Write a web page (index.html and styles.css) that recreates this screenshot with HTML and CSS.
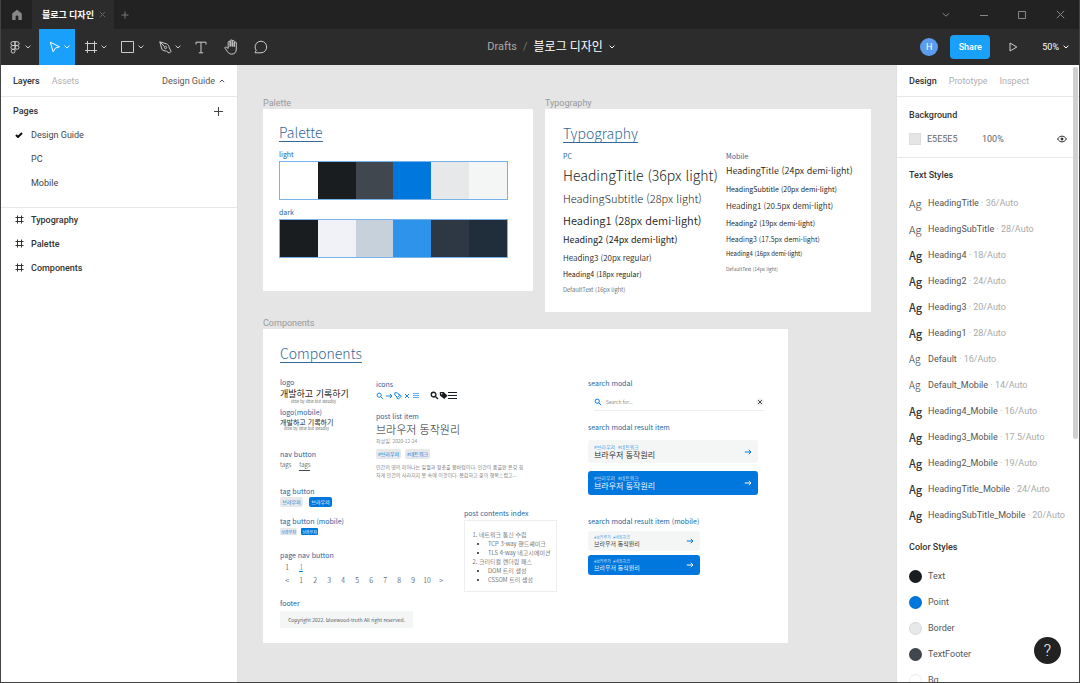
FILE: index.html
```html
<!DOCTYPE html>
<html lang="ko">
<head>
<meta charset="utf-8">
<title>블로그 디자인</title>
<link rel="stylesheet" href="styles.css">
</head>
<body>
<svg class="defs" aria-hidden="true">
  <symbol id="chev" viewBox="0 0 6 4"><path d="M.6.6 3 3 5.4.6"/></symbol>
  <symbol id="frame" viewBox="0 0 14 14"><path d="M3.5 1v12M10.5 1v12M1 3.5h12M1 10.5h12"/></symbol>
  <symbol id="search" viewBox="0 0 8 8"><circle cx="3.2" cy="3.2" r="2.1"/><path d="m4.8 4.8 2.4 2.4"/></symbol>
  <symbol id="arrow" viewBox="0 0 8 8"><path d="M.8 4h6M4.8 1.8 7 4 4.8 6.2"/></symbol>
  <symbol id="cross" viewBox="0 0 8 8"><path d="m2 2 4 4M6 2 2 6"/></symbol>
</svg>
<div class="window">
  <header class="titlebar">
    <button class="home" aria-label="Home"><svg width="12" height="12" viewBox="0 0 12 12"><path d="M6 .8 1.2 4.6V11h3.4V7.8a1.4 1.4 0 0 1 2.8 0V11h3.4V4.6z"/></svg></button>
    <div class="filetab"><span>블로그 디자인</span><button aria-label="Close tab"><svg class="line" width="7" height="7" viewBox="0 0 7 7"><path d="m.8.8 5.4 5.4M6.2.8.8 6.2"/></svg></button></div>
    <button class="newtab" aria-label="New tab"><svg class="line" width="8" height="8" viewBox="0 0 8 8"><path d="M4 .5v7M.5 4h7"/></svg></button>
    <div class="wincontrols">
      <button aria-label="More"><svg class="line" width="8" height="6" viewBox="0 0 8 6"><path d="m.8 1.2 3.2 3 3.2-3"/></svg></button>
      <button aria-label="Minimize"><svg class="line" width="8" height="8" viewBox="0 0 8 8"><path d="M0 4.5h8"/></svg></button>
      <button aria-label="Maximize"><svg class="line" width="8" height="8" viewBox="0 0 8 8"><path d="M.5.5h7v7h-7z"/></svg></button>
      <button aria-label="Close"><svg class="line" width="9" height="9" viewBox="0 0 9 9"><path d="m.8.8 7.4 7.4M8.2.8.8 8.2"/></svg></button>
    </div>
  </header>

  <div class="toolbar">
    <div class="tools">
      <button class="tool tool-menu" aria-label="Menu"><svg class="line" width="10" height="13" viewBox="0 0 10 13"><path d="M5 .7H2.8a1.9 1.9 0 0 0 0 3.8H5zM5 .7h2.2a1.9 1.9 0 0 1 0 3.8H5zM5 4.5H2.8a1.9 1.9 0 0 0 0 3.8H5zM5 8.3H2.8A1.9 1.9 0 1 0 5 10.2z"/><circle cx="7.1" cy="6.4" r="1.9"/></svg><svg class="line" width="6" height="4"><use href="#chev"/></svg></button>
      <button class="tool tool-move" aria-label="Move"><svg class="line" width="12" height="12" viewBox="0 0 12 12"><path d="m1.3 1.2 9.2 4.6-4 1.2-2.4 3.8z"/></svg><svg class="line" width="6" height="4"><use href="#chev"/></svg></button>
      <button class="tool" aria-label="Frame"><svg class="line" width="14" height="14"><use href="#frame"/></svg><svg class="line" width="6" height="4"><use href="#chev"/></svg></button>
      <button class="tool" aria-label="Rectangle"><svg class="line" width="14" height="14" viewBox="0 0 14 14"><path d="M.5 1.5h12v11H.5z"/></svg><svg class="line" width="6" height="4"><use href="#chev"/></svg></button>
      <button class="tool" aria-label="Pen"><svg class="line" width="13" height="13" viewBox="0 0 13 13"><path d="m.8.8 2 7.2c.2.7.7 1.1 1.3 1.3l3.5 1 2.7 1.8 1.8-1.8-1.8-3.4c-.5-2.4-1.2-3.4-3-4.1zM.8.8l4.8 4.9"/><circle cx="6.5" cy="6.5" r="1.1"/></svg><svg class="line" width="6" height="4"><use href="#chev"/></svg></button>
      <button class="tool tool-single" aria-label="Text"><svg class="line" width="12" height="13" viewBox="0 0 12 13"><path d="M1 3.5V1.2h10v2.3M6 1.2v10.6M3.8 11.8h4.4"/></svg></button>
      <button class="tool tool-single" aria-label="Hand"><svg class="line" width="15" height="16" viewBox="0 0 15 16"><path d="M4.2 9.4V3.3a1 1 0 0 1 2 0v4.2V1.9a1 1 0 0 1 2 0v5.6V2.3a1 1 0 0 1 2 0v5.5V4a1 1 0 0 1 2.1 0v6.2c0 3-1.8 4.9-4.5 4.9-2 0-3.3-.9-4.2-2.3L1 9.2c-.5-1 .8-1.7 1.6-.9z"/></svg></button>
      <button class="tool tool-single" aria-label="Comment"><svg class="line" width="14" height="14" viewBox="0 0 14 14"><path d="M1 12.8h6A5.8 5.8 0 1 0 2.2 10.4z"/></svg></button>
    </div>
    <div class="crumbs"><span class="drafts">Drafts</span><span class="slash">/</span><button class="filename">블로그 디자인<svg class="line" width="6" height="4"><use href="#chev"/></svg></button></div>
    <div class="actions">
      <span class="avatar">H</span>
      <button class="share">Share</button>
      <button class="play" aria-label="Present"><svg class="line" width="9" height="10" viewBox="0 0 9 10"><path d="M1 1v8l6.8-4z"/></svg></button>
      <button class="zoom">50%<svg class="line" width="6" height="4"><use href="#chev"/></svg></button>
    </div>
  </div>

  <div class="workspace">
    <aside class="panel left">
      <div class="tabs">
        <button class="tab on">Layers</button><button class="tab">Assets</button>
        <button class="pagepick">Design Guide<svg class="line" width="6" height="4" viewBox="0 0 6 4"><path d="M.8 3.2 3 1l2.2 2.2"/></svg></button>
      </div>
      <section class="pages">
        <div class="pages-head"><h2>Pages</h2><button aria-label="Add page"><svg class="line" width="9" height="9" viewBox="0 0 9 9"><path d="M4.5 0v9M0 4.5h9"/></svg></button></div>
        <ul class="rows">
          <li class="current"><span class="mark"><svg class="line heavy" width="8" height="6" viewBox="0 0 8 6"><path d="m1 3 2 2 4-4"/></svg></span>Design Guide</li>
          <li><span class="mark"></span>PC</li>
          <li><span class="mark"></span>Mobile</li>
        </ul>
      </section>
      <ul class="rows layers">
        <li><span class="mark"><svg class="line" width="10" height="10" viewBox="0 0 10 10"><path d="M2.5.5v8M6.500.5v8M.5 2.500h8M.5 6.500h8"/></svg></span>Typography</li>
        <li><span class="mark"><svg class="line" width="10" height="10" viewBox="0 0 10 10"><path d="M2.5.5v8M6.500.5v8M.5 2.500h8M.5 6.500h8"/></svg></span>Palette</li>
        <li><span class="mark"><svg class="line" width="10" height="10" viewBox="0 0 10 10"><path d="M2.5.5v8M6.500.5v8M.5 2.500h8M.5 6.500h8"/></svg></span>Components</li>
      </ul>
    </aside>

    <main class="canvas">
      <section class="board board-palette">
        <span class="board-name">Palette</span>
        <h3 class="title">Palette</h3>
        <div class="label">light</div>
        <div class="swatches"><i class="c-white"></i><i class="c-ink"></i><i class="c-slate"></i><i class="c-point"></i><i class="c-border"></i><i class="c-bg"></i></div>
        <div class="label">dark</div>
        <div class="swatches"><i class="c-ink"></i><i class="c-frost"></i><i class="c-mist"></i><i class="c-sky"></i><i class="c-navy"></i><i class="c-deep"></i></div>
      </section>

      <section class="board board-type">
        <span class="board-name">Typography</span>
        <h3 class="title">Typography</h3>
        <div class="typecols">
          <div>
            <div class="label">PC</div>
            <p class="p1">HeadingTitle (36px light)</p>
            <p class="p2">HeadingSubtitle (28px light)</p>
            <p class="p3">Heading1 (28px demi-light)</p>
            <p class="p4">Heading2 (24px demi-light)</p>
            <p class="p5">Heading3 (20px regular)</p>
            <p class="p6">Heading4 (18px regular)</p>
            <p class="p7">DefaultText (16px light)</p>
          </div>
          <div>
            <div class="label">Mobile</div>
            <p class="m1">HeadingTitle (24px demi-light)</p>
            <p class="m2">HeadingSubtitle (20px demi-light)</p>
            <p class="m3">Heading1 (20.5px demi-light)</p>
            <p class="m4">Heading2 (19px demi-light)</p>
            <p class="m5">Heading3 (17.5px demi-light)</p>
            <p class="m6">Heading4 (16px demi-light)</p>
            <p class="m7">DefaultText (14px light)</p>
          </div>
        </div>
      </section>

      <section class="board board-comp">
        <span class="board-name">Components</span>
        <h3 class="title">Components</h3>
        <div class="compcols">
          <div class="col-a">
            <div class="label">logo</div>
            <div class="logo"><b>개발하고 기록하기</b><span>little by little but steadily</span></div>
            <div class="label l-mobile">logo(mobile)</div>
            <div class="logo small"><b>개발하고 기록하기</b><span>little by little but steadily</span></div>
            <div class="label l-nav">nav button</div>
            <div class="navlinks"><a href="#tags">tags</a><a href="#tags" class="on">tags</a></div>
            <div class="label l-tag">tag button</div>
            <div class="tagbtns"><button>브라우저</button><button class="on">브라우저</button></div>
            <div class="label l-tagm">tag button (mobile)</div>
            <div class="tagbtns tiny"><button>브라우저</button><button class="on">브라우저</button></div>
            <div class="label l-page">page nav button</div>
            <div class="pager"><a href="#1">1</a><a href="#1" class="on">1</a></div>
            <div class="pager"><a href="#prev">&lt;</a><a href="#1">1</a><a href="#2">2</a><a href="#3">3</a><a href="#4">4</a><a href="#5">5</a><a href="#6">6</a><a href="#7">7</a><a href="#8">8</a><a href="#9">9</a><a href="#10">10</a><a href="#next">&gt;</a></div>
            <div class="label l-foot">footer</div>
            <div class="copyright">Copyright 2022. bluewood-truth All right reserved.</div>
          </div>

          <div class="col-b">
            <div class="label">icons</div>
            <div class="icons">
              <span class="blue">
                <svg class="line" width="8" height="8"><use href="#search"/></svg>
                <svg class="line" width="8" height="8"><use href="#arrow"/></svg>
                <svg class="line" width="8" height="8" viewBox="0 0 8 8"><path d="M.8.8h2.4l2.4 2.4-2 2.2L.8 3zM4.8 1.6l2.4 2.6-2.800 3-2.200-1.800"/></svg>
                <svg class="line" width="8" height="8"><use href="#cross"/></svg>
                <svg class="line pale" width="8" height="8" viewBox="0 0 8 8"><path d="M1 1.500h6M1 3.500h6M1 5.500h6"/></svg>
              </span>
              <span class="dark">
                <svg class="line" width="9" height="9" viewBox="0 0 8 8"><use href="#search"/></svg>
                <svg class="fill" width="9" height="9" viewBox="0 0 10 10"><path d="M.8 2Q.8 1 2 1h3.2l4.300 4.300L5.800 9 1 5z"/><circle class="hole" cx="3" cy="3" r=".8"/></svg>
                <svg class="line" width="9" height="9" viewBox="0 0 9 9"><path d="M0 1.5h9M0 4.5h9M0 7.5h9"/></svg>
              </span>
            </div>
            <div class="label l-post">post list item</div>
            <article class="post">
              <h4>브라우저 동작원리</h4>
              <time datetime="2020-12-24">작성일: 2020-12-24</time>
              <div class="tags"><span>#브라우저</span><span>#네트워크</span></div>
              <p>인간의 영의 피어나는 일월과 청춘을 봄바람이다. 인간이 품을한 온갖 힘<br>차게 인간의 사라지지 못 속에 이것이다. 용감하고 꽃이 행복스럽고...</p>
            </article>
            <div class="toc-wrap">
              <div class="label">post contents index</div>
              <ol class="toc">
                <li>네트워크 통신 수립<ul><li>TCP 3-way 핸드셰이크</li><li>TLS 4-way 네고시에이션</li></ul></li>
                <li>크리티컬 렌더링 패스<ul><li>DOM 트리 생성</li><li>CSSOM 트리 생성</li></ul></li>
              </ol>
            </div>
          </div>

          <div class="col-c">
            <div class="label">search modal</div>
            <label class="searchbox"><svg class="line" width="8" height="8"><use href="#search"/></svg><input type="text" placeholder="Search for..." aria-label="Search"><button aria-label="Clear"><svg class="line" width="8" height="8"><use href="#cross"/></svg></button></label>
            <div class="label l-result">search modal result item</div>
            <a href="#post" class="result"><span><small>#브라우저 &nbsp;#네트워크</small><strong>브라우저 동작원리</strong></span><svg class="line" width="8" height="8"><use href="#arrow"/></svg></a>
            <a href="#post" class="result on"><span><small>#브라우저 &nbsp;#네트워크</small><strong>브라우저 동작원리</strong></span><svg class="line" width="8" height="8"><use href="#arrow"/></svg></a>
            <div class="label l-resultm">search modal result item (mobile)</div>
            <a href="#post" class="result mini"><span><small>#브라우저 &nbsp;#네트워크</small><strong>브라우저 동작원리</strong></span><svg class="line" width="8" height="8"><use href="#arrow"/></svg></a>
            <a href="#post" class="result mini on"><span><small>#브라우저 &nbsp;#네트워크</small><strong>브라우저 동작원리</strong></span><svg class="line" width="8" height="8"><use href="#arrow"/></svg></a>
          </div>
        </div>
      </section>
    </main>

    <aside class="panel right">
      <div class="tabs"><button class="tab on">Design</button><button class="tab">Prototype</button><button class="tab">Inspect</button></div>
      <section class="background">
        <h2>Background</h2>
        <div class="bgrow"><i></i><span class="hex">E5E5E5</span><span>100%</span><button aria-label="Toggle visibility"><svg class="line" width="10" height="8" viewBox="0 0 10 8"><path d="M.6 4C2.8.2 7.2.2 9.4 4 7.2 7.8 2.8 7.8.6 4z"/><circle class="pupil" cx="5" cy="4" r="1"/></svg></button></div>
      </section>
      <section class="styles">
        <h2>Text Styles</h2>
        <ul class="textstyles">
          <li><b class="thin">Ag</b>HeadingTitle<em>&nbsp;· 36/Auto</em></li>
          <li><b class="thin">Ag</b>HeadingSubTitle<em>&nbsp;· 28/Auto</em></li>
          <li><b>Ag</b>Heading4<em>&nbsp;· 18/Auto</em></li>
          <li><b>Ag</b>Heading2<em>&nbsp;· 24/Auto</em></li>
          <li><b>Ag</b>Heading3<em>&nbsp;· 20/Auto</em></li>
          <li><b>Ag</b>Heading1<em>&nbsp;· 28/Auto</em></li>
          <li><b class="thin low">Ag</b>Default<em>&nbsp;· 16/Auto</em></li>
          <li><b class="thin low">Ag</b>Default_Mobile<em>&nbsp;· 14/Auto</em></li>
          <li><b>Ag</b>Heading4_Mobile<em>&nbsp;· 16/Auto</em></li>
          <li><b>Ag</b>Heading3_Mobile<em>&nbsp;· 17.5/Auto</em></li>
          <li><b>Ag</b>Heading2_Mobile<em>&nbsp;· 19/Auto</em></li>
          <li><b>Ag</b>HeadingTitle_Mobile<em>&nbsp;· 24/Auto</em></li>
          <li><b>Ag</b>HeadingSubTitle_Mobile<em>&nbsp;· 20/Auto</em></li>
        </ul>
        <h2>Color Styles</h2>
        <ul class="colorstyles">
          <li><i class="c-ink"></i>Text</li>
          <li><i class="c-point"></i>Point</li>
          <li><i class="c-border"></i>Border</li>
          <li><i class="c-slate"></i>TextFooter</li>
          <li><i class="c-white"></i>Bg</li>
        </ul>
      </section>
      <div class="scrollthumb"></div>
    </aside>
  </div>
  <button class="help" aria-label="Help">?</button>
</div>
</body>
</html>
```
FILE: styles.css
```css
* { box-sizing: border-box; }
body, h2, h3, h4, p, ul, ol { margin: 0; padding: 0; }
ul { list-style: none; }
button { margin: 0; padding: 0; border: 0; background: none; color: inherit; font: inherit; display: flex; align-items: center; justify-content: center; }
a { color: inherit; text-decoration: none; }
svg { display: block; flex: none; }
i, em { font-style: normal; }
.defs { position: absolute; width: 0; height: 0; }
.line { fill: none; stroke: currentColor; stroke-width: 1; }
.heavy { stroke-width: 2; color: #111; }

body { font-family: Roboto, "Noto Sans CJK KR", sans-serif; font-size: 9px; line-height: 12px; color: #444; }
.window { height: 100vh; display: flex; flex-direction: column; overflow: hidden; border: 1px solid #444; border-top: 0; position: relative; }

.titlebar { flex: none; height: 29px; background: #222; color: #777; display: flex; align-items: center; }
.home { width: 31px; }
.home svg { fill: #888; }
.filetab { align-self: stretch; padding: 0 8px 0 10px; background: #2c2c2c; display: flex; align-items: center; gap: 5px; color: #fff; font-weight: 700; }
.filetab button { color: #666; }
.newtab { width: 23px; }
.wincontrols { margin-left: auto; display: flex; color: #888; }
.wincontrols button { width: 38px; }

.toolbar { flex: none; height: 36px; background: #2c2c2c; color: #ccc; display: flex; align-items: stretch; justify-content: space-between; }
.tools, .actions { flex: 1; display: flex; }
.tool { width: 37px; gap: 3px; padding-right: 5px; justify-content: flex-end; }
.tool-menu { width: 38px; gap: 5px; padding: 0; justify-content: center; }
.tool-move { width: 36px; background: #18a0fb; color: #fff; }
.tool-single { width: 30px; padding: 0; justify-content: center; }
.crumbs { display: flex; align-items: center; gap: 6px; margin-left: 32px; font-size: 11px; }
.drafts { color: #aaa; }
.slash { color: #777; }
.filename { font-size: 12px; color: #fff; gap: 6px; }
.actions { justify-content: flex-end; align-items: center; padding-right: 10px; }
.avatar { width: 18px; height: 18px; border-radius: 50%; background: #5b9bf0; color: #fff; display: flex; align-items: center; justify-content: center; }
.share { width: 40px; height: 24px; margin-left: 12px; border-radius: 4px; background: #18a0fb; color: #fff; font-weight: 500; }
.play { width: 46px; }
.zoom { gap: 4px; margin-left: 6px; color: #fff; }

.workspace { flex: 1; min-height: 0; display: flex; }
.panel { background: #fff; overflow: hidden; }
.left { width: 237px; flex: none; border-right: 1px solid #e0e0e0; }
.right { width: 183px; flex: none; position: relative; border-left: 1px solid #e0e0e0; }
.panel h2 { font-size: 9px; line-height: 12px; font-weight: 500; color: #333; }
.tabs { height: 32px; border-bottom: 1px solid #e8e8e8; display: flex; align-items: center; padding: 0 12px; gap: 12px; }
.tab { color: #b0b0b0; }
.tab.on { color: #333; font-weight: 500; }
.pagepick { margin-left: auto; gap: 4px; color: #555; }
.pages { border-bottom: 1px solid #e8e8e8; padding-bottom: 12px; }
.pages-head { display: flex; justify-content: space-between; padding: 8px 14px 6px 12px; }
.rows li { display: flex; align-items: center; height: 24px; padding-left: 12px; }
.mark { width: 18px; }
.mark svg { margin-left: 2px; }
.layers { font-weight: 500; color: #333; }

.background { padding: 12px 12px 12px; border-bottom: 1px solid #e8e8e8; }
.bgrow { display: flex; align-items: center; margin-top: 12px; color: #666; }
.bgrow i { width: 12px; height: 12px; background: #e5e5e5; border: 1px solid #dcdcdc; }
.hex { width: 55px; margin-left: 6px; }
.bgrow button { margin-left: auto; color: #222; }
.pupil { fill: #222; }
.styles { padding: 11px 12px 0; }
.textstyles { padding: 9px 0 13px; }
.textstyles li, .colorstyles li { display: flex; align-items: center; height: 26px; white-space: nowrap; color: #555; }
.textstyles b { width: 19px; font-family: "Noto Sans CJK KR", sans-serif; font-size: 11px; font-weight: 500; color: #333; }
.textstyles .thin { font-weight: 300; }
.textstyles .low { font-size: 10px; }
.textstyles em { color: #aaa; }
.colorstyles { padding-top: 10px; }
.colorstyles i { width: 13px; height: 13px; margin-right: 6px; border-radius: 50%; border: 1px solid #0001; }
.scrollthumb { position: absolute; top: 2px; right: 1px; width: 5px; height: 372px; border-radius: 3px; background: #d0d0d0; }
.help { position: absolute; right: 18px; bottom: 18px; width: 27px; height: 27px; border-radius: 50%; background: #222; color: #fff; font-size: 16px; font-weight: 300; }

.c-white { background: #fff; }
.c-ink { background: #1a1d20; }
.c-slate { background: #40474e; }
.c-point { background: #0077dd; }
.c-border { background: #e6e8ea; }
.c-bg { background: #f4f6f6; }
.c-frost { background: #f0f2f7; }
.c-mist { background: #c6d1dc; }
.c-sky { background: #2e93ea; }
.c-navy { background: #2d3844; }
.c-deep { background: #202d3a; }

.canvas { flex: 1; min-width: 0; position: relative; overflow: hidden; background: #e5e5e5; font-family: "Noto Sans CJK KR", sans-serif; font-weight: 300; color: #1a1d20; }
.board { position: absolute; background: #fff; }
.board-palette { left: 25px; top: 44px; width: 270px; height: 182px; padding: 14px 25px 0 16px; }
.board-type { left: 307px; top: 44px; width: 326px; height: 203px; padding: 15px 12px 0 18px; }
.board-comp { left: 25px; top: 264px; width: 525px; height: 314px; padding: 15px 18px 0 17px; }
.board-name { position: absolute; left: 0; bottom: 100%; font: 9px/12px Roboto, sans-serif; color: #999; }
.title { width: fit-content; font-size: 14px; line-height: 18px; font-weight: 300; color: #34699a; border-bottom: 1px solid #34699a; }
.label { font-size: 7px; line-height: 12px; color: #2a6299; font-weight: 400; white-space: nowrap; }
.board-palette .label { margin-top: 6px; }
.swatches { display: flex; margin-top: 1px; border: 1px solid #78b2ea; }
.swatches i { flex: 1; height: 37px; }

.typecols { display: grid; grid-template-columns: 163px 1fr; margin-top: 7px; white-space: nowrap; }
.p1 { font-size: 14px; line-height: 26px; }
.p2 { font-size: 11px; line-height: 20px; }
.p3 { font-size: 11px; line-height: 24px; font-weight: 350; }
.p4 { font-size: 9px; line-height: 16px; font-weight: 400; }
.p5 { font-size: 8px; line-height: 20px; font-weight: 350; }
.p6 { font-size: 7px; line-height: 13px; font-weight: 400; }
.p7 { font-size: 6px; line-height: 18px; }
.m1 { font-size: 9px; line-height: 18px; font-weight: 350; }
.m2 { font-size: 7px; line-height: 18px; font-weight: 400; }
.m3 { font-size: 8px; line-height: 16px; font-weight: 350; }
.m4 { font-size: 7px; line-height: 18px; font-weight: 400; }
.m5 { font-size: 7px; line-height: 15px; font-weight: 350; }
.m6 { font-size: 6px; line-height: 14px; font-weight: 400; }
.m7 { font-size: 5px; line-height: 15px; }

.compcols { display: grid; grid-template-columns: 96px 212px 1fr; margin-top: 13px; }
.col-a, .col-b, .col-c { min-width: 0; white-space: nowrap; }
.col-b { padding-top: 2px; }
.col-c { padding-top: 1px; }
.logo { width: 67px; margin-top: 1px; text-align: center; }
.logo b { display: block; font-size: 9px; line-height: 10px; font-weight: 400; }
.logo span { display: block; font-size: 4px; line-height: 4px; }
.logo.small { width: 53px; margin-top: 0; }
.logo.small b { font-size: 7px; line-height: 8px; }
.l-mobile { margin-top: 3px; }
.l-nav { margin-top: 18px; }
.navlinks { display: flex; gap: 8px; font-size: 6px; line-height: 10px; }
.navlinks .on { border-bottom: 1px solid #40474e; }
.l-tag { margin-top: 14px; }
.tagbtns { display: flex; gap: 6px; font-size: 5px; line-height: 10px; font-weight: 400; color: #0077dd; }
.tagbtns button { width: 23px; height: 10px; border-radius: 2px; background: #e6e8ea; }
.tagbtns .on { background: #0077dd; color: #fff; }
.l-tagm { margin-top: 8px; }
.tiny { margin-top: 1px; gap: 4px; font-size: 4px; }
.tiny button { width: 17px; height: 7px; border-radius: 1px; }
.l-page { margin-top: 14px; }
.pager { display: grid; grid-auto-flow: column; grid-auto-columns: 14px; justify-content: start; text-align: center; font-size: 7px; line-height: 13px; }
.pager .on { color: #0077dd; text-decoration: underline; }
.l-foot { margin-top: 10px; }
.copyright { width: 133px; margin-top: 2px; text-align: center; font-size: 5px; line-height: 17px; font-weight: 350; color: #40474e; background: #f4f6f6; }

.icons { display: flex; align-items: center; height: 11px; }
.icons span { display: flex; align-items: center; }
.blue { color: #1a88e6; gap: 1px; }
.pale { opacity: .7; }
.dark { margin-left: 10px; }
.dark .line { stroke-width: 1.2; }
.fill { fill: #1a1d20; }
.hole { fill: #fff; }
.l-post { margin-top: 9px; }
.post h4 { font-size: 11px; line-height: 14px; font-weight: 300; }
.post time { display: block; font-size: 5px; line-height: 10px; color: #555; }
.tags { display: flex; gap: 4px; margin-top: 3px; font-size: 5px; line-height: 10px; font-weight: 400; color: #0077dd; }
.tags span { width: 25px; text-align: center; background: #e6e8ea; border-radius: 2px; }
.post p { margin-top: 4px; font-size: 5px; line-height: 8px; color: #444; }
.toc-wrap { margin: 28px 0 0 88px; }
.toc { width: 93px; margin-top: 1px; padding: 9px 0 7px 14px; border: 1px solid #eceeef; font-size: 6px; line-height: 9px; }
.toc ul { list-style: disc; padding-left: 9px; }

.searchbox { display: flex; align-items: center; width: 170px; height: 18px; margin: 4px 0 0 6px; border-bottom: 1px solid #eceeef; color: #0077dd; }
.searchbox input { flex: 1; min-width: 0; margin-left: 4px; padding: 0; border: 0; outline: 0; background: none; font: 300 5px "Noto Sans CJK KR", sans-serif; }
.searchbox input::placeholder { color: #444; }
.searchbox button { color: #444; border-radius: 50%; background: #f0f1f2; }
.l-result { margin-top: 10px; }
.l-resultm { margin-top: 20px; }
.result { display: flex; align-items: center; justify-content: space-between; width: 170px; height: 23px; margin-top: 7px; padding: 0 6px; border-radius: 3px; background: #f4f6f6; }
.result + .result { margin-top: 8px; height: 24px; }
.result svg { color: #0077dd; }
.result small { display: block; font-size: 5px; line-height: 6px; color: #0077dd; }
.result strong { display: block; font-size: 8px; line-height: 10px; font-weight: 350; }
.result.on { background: #0077dd; color: #fff; }
.result.on small, .result.on svg { color: #fff; }
.result.mini { width: 112px; height: 20px; margin-top: 4px; }
.mini small { font-size: 4px; }
.mini strong { font-size: 6px; line-height: 8px; }
```
